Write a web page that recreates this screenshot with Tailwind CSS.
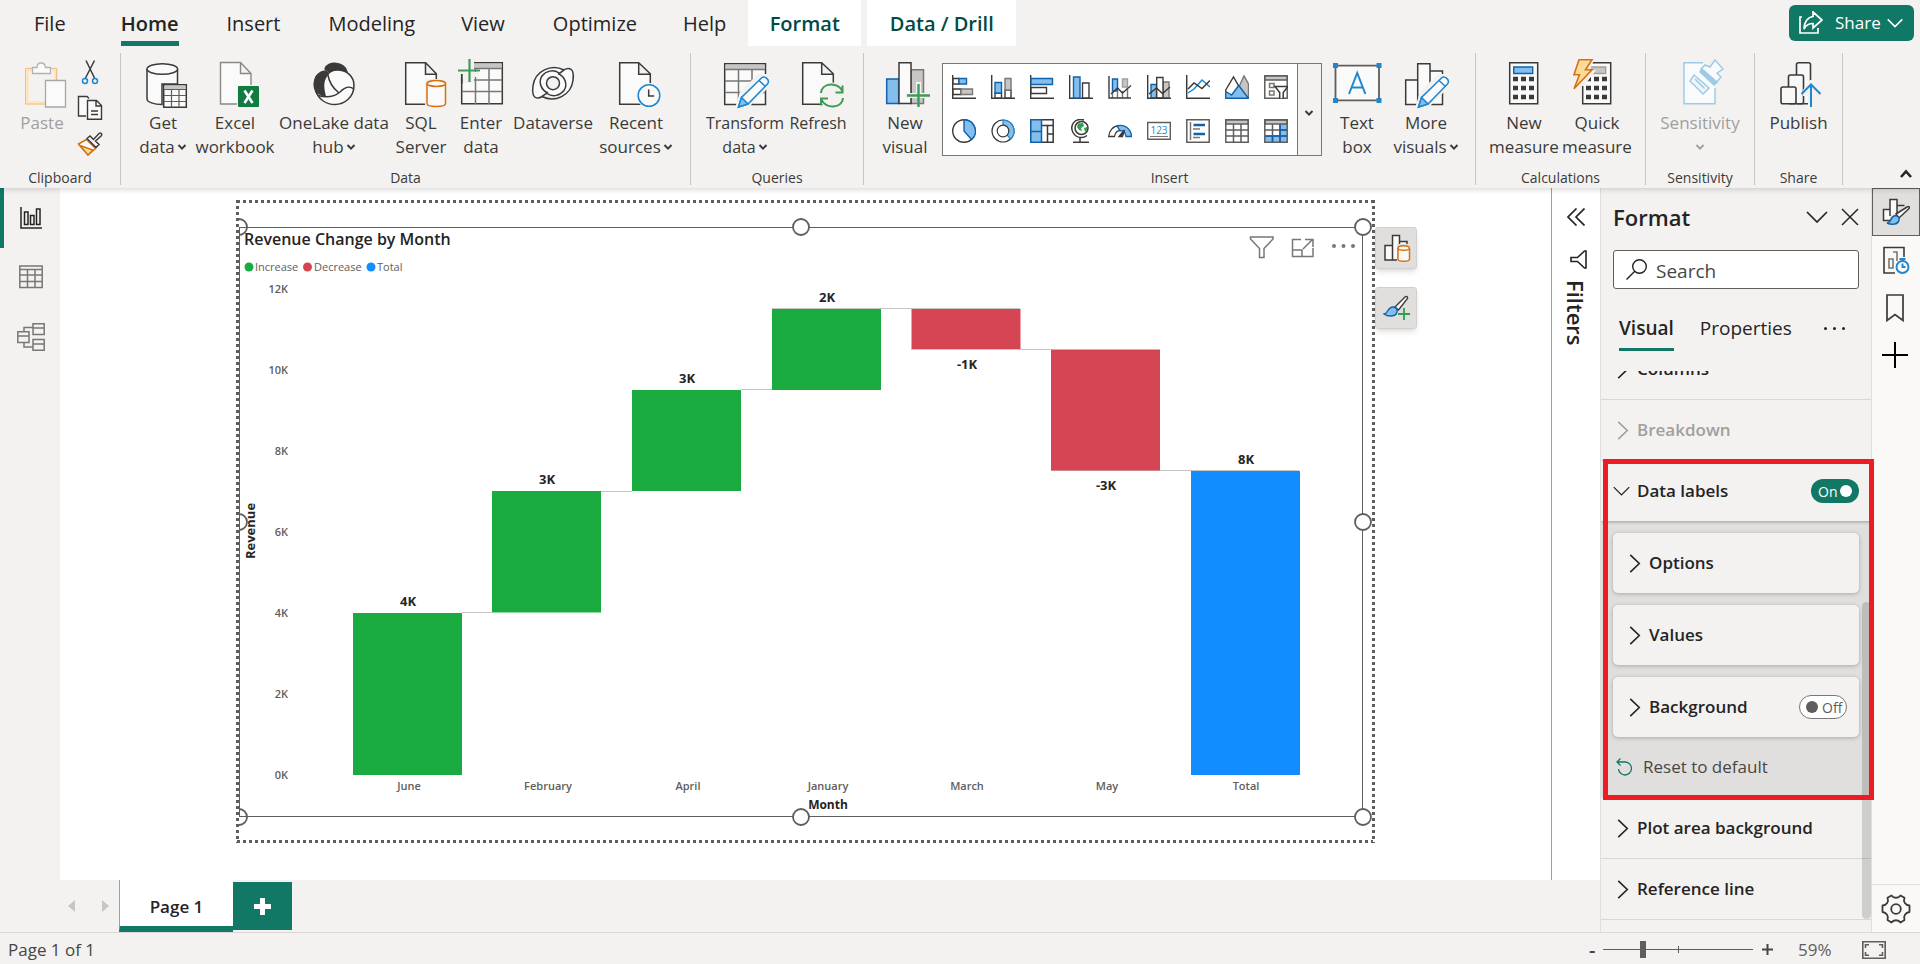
<!DOCTYPE html>
<html lang="en">
<head>
<meta charset="utf-8">
<title>Report editor</title>
<script src="https://cdn.jsdelivr.net/npm/@tailwindcss/browser@4"></script>
</head>
<body class="flex h-screen flex-col overflow-hidden bg-[#f3f2f1] font-['Open_Sans','Noto_Sans',sans-serif] text-[#252423]">

<svg class="hidden" aria-hidden="true">
  <symbol id="caret" viewBox="0 0 10 8"><path d="M1.5 2 5 5.6 8.500 2" fill="none" stroke="currentColor" stroke-width="2"/></symbol>
  <symbol id="right" viewBox="0 0 12 20"><path d="M1 1 10.500 10 1 19" fill="none" stroke="currentColor" stroke-width="1.700"/></symbol>
  <symbol id="down" viewBox="0 0 22 12"><path d="M1 1 11 11 21 1" fill="none" stroke="currentColor" stroke-width="1.700"/></symbol>
</svg>

<header class="relative z-10 shrink-0 shadow-[0_2px_5px_rgba(0,0,0,0.14)]">
  <div class="flex h-[46px] items-start">
    <nav class="flex h-full grow items-stretch pl-[10px] text-[20px] leading-[48px]">
      <a href="#" class="mr-[7px] px-6">File</a>
      <a href="#" class="relative px-6 font-semibold">Home<span class="absolute inset-x-6 bottom-0 h-[5px] bg-[#117865]"></span></a>
      <a href="#" class="px-6">Insert</a>
      <a href="#" class="pr-[22px] pl-6">Modeling</a>
      <a href="#" class="px-6">View</a>
      <a href="#" class="pr-[22px] pl-6">Optimize</a>
      <a href="#" class="pr-[22px] pl-6">Help</a>
      <a href="#" class="mr-[6px] w-[113px] bg-white text-center font-semibold text-[#004a43]">Format</a>
      <a href="#" class="w-[149px] bg-white text-center font-semibold text-[#004a43]">Data / Drill</a>
    </nav>
    <button class="mt-[5px] mr-[6px] flex h-9 w-[125px] items-center rounded-md bg-[#117865] pl-[10px] text-[17px] text-white">
      <svg class="size-6" viewBox="0 0 24 24" fill="none" stroke="currentColor" stroke-width="1.700"><path d="M3 6H1v16h18v-5M14 1l9 8-9 8v-4.500C10 12.500 7 14 5 18c0-7 4-12 9-12.500z"/></svg>
      <span class="ml-3">Share</span>
      <svg class="ml-[6px] h-[10px] w-4" viewBox="0 0 22 12"><path d="M1 1 11 11 21 1" fill="none" stroke="currentColor" stroke-width="2.200"/></svg>
    </button>
  </div>

  <div class="flex h-[142px] pt-[7px] text-[17px] leading-6 text-[#3b3a39]">
    <!-- Clipboard -->
    <section class="flex h-[132px] w-[121px] shrink-0 flex-col border-r border-[#c8c6c4]">
      <div class="flex grow pt-[7px] pl-4">
        <button class="flex w-[52px] flex-col items-center text-[#a19f9d]" disabled>
          <svg class="mb-[3px] h-12 w-12 shrink-0 overflow-visible" viewBox="18 60 48 48" fill="none"><path d="M32 69.500H27v33.500h29V69.500h-4" stroke="#fae5c5" stroke-width="4"/><path d="M32 68.500H25.500v35.500h31V68.500H51" stroke="#f0bd8f"/><path d="M32.500 73.500v-6H37c0-6 8-6 8.500 0h5v6z" fill="#fafafa" stroke="#b5b3b1" stroke-width="1.300"/><path d="M45.500 80.500h20v26.500h-20z" fill="#fafafa" stroke="#a9a7a5" stroke-width="1.300"/></svg>
          Paste
        </button>
        <div class="flex flex-col gap-3 pl-[10px]">
          <button class="h-6" aria-label="Cut"><svg class="h-6 w-6 overflow-visible" viewBox="78 59 24 24" fill="none" stroke="#3b3a39" stroke-width="1.500"><path d="M86 59.500 94.500 77M94.500 59.500 85.500 77"/><g stroke="#1e87cf"><circle cx="85" cy="80" r="2.500"/><circle cx="95" cy="80" r="2.500"/></g></svg></button>
          <button class="h-6" aria-label="Copy"><svg class="h-6 w-6 overflow-visible" viewBox="78 95 24 24" fill="#fafafa" stroke="#3b3a39" stroke-width="1.400"><path d="M86 115H78.500V95.500H87l2 2M87.500 99.500h9l5 5v13.800h-14zM96 99.500v5.500h5.500M91 110h7M91 113.500h7"/></svg></button>
          <button class="h-6" aria-label="Format painter"><svg class="h-6 w-6 overflow-visible" viewBox="78 130 24 24" fill="none" stroke-width="1.500"><path d="m78.500 142 8-4.500 9 9L88 153z" fill="#fff" stroke="#d8710c"/><path d="M80 143.500 93 148l-5 5z" fill="#fbdc9b" stroke="#d8710c"/><path d="m87 136.500 9 9 3-3-3.500-3.500 6-5.500c1-2-1-3-2.500-2l-5.500 6-3.500-3.500z" fill="#fafafa" stroke="#3b3a39"/></svg></button>
        </div>
      </div>
      <h2 class="text-center text-[14px] leading-[14px]">Clipboard</h2>
    </section>

    <!-- Data -->
    <section class="flex h-[132px] w-[570px] shrink-0 flex-col border-r border-[#c8c6c4]">
      <div class="flex grow justify-start pt-[7px] pl-[9px] whitespace-nowrap">
        <button class="flex w-[66px] shrink-0 flex-col items-center">
          <svg class="mb-[3px] h-12 w-12 shrink-0 overflow-visible" viewBox="139 60 48 48" fill="#fafafa" stroke="#3b3a39" stroke-width="1.500"><path d="M147 69v30c0 3 7 5.500 15 5.500V84h15.500V69"/><ellipse cx="162.300" cy="69" rx="15.300" ry="5.300"/><path d="M163.700 84.700h22.600v22.600h-22.600z"/><path d="M164.500 85.500h21v3.500h-21z" fill="#c8c6c4" stroke="none"/><path d="M164 89.500h22M164 95.500h22M164 101.500h22M171.500 89.500v18M179 89.500v18" stroke-width="1.200" stroke="#605e5c"/></svg>
          <span>Get</span><span class="flex items-center gap-[2px]">data <svg class="h-2 w-[10px]"><use href="#caret"/></svg></span>
        </button>
        <button class="flex w-[78px] shrink-0 flex-col items-center">
          <svg class="mb-[3px] h-12 w-12 shrink-0 overflow-visible" viewBox="211 60 48 48"><path d="M220.500 62.500h20l10.500 11v30.500h-30.500zM240.500 62.500v11h10.500" fill="#fafafa" stroke="#8a8886" stroke-width="1.400"/><path d="M237 85h22v22h-22z" fill="#f3f2f1"/><rect x="238" y="86" width="21" height="21" rx="1" fill="#107c41"/><path d="m244.500 90.500 8 12.500M252.500 90.500l-8 12.500" stroke="#fff" stroke-width="2.600"/></svg>
          <span>Excel</span><span>workbook</span>
        </button>
        <button class="flex w-[120px] shrink-0 flex-col items-center">
          <svg class="mb-[3px] h-12 w-12 shrink-0 overflow-visible" viewBox="310 60 48 48" fill="none" stroke="#3b3a39" stroke-width="1.500"><path d="M325 69c2-8 20-8 22 3l-10 5z" fill="#3b3a39"/><path d="M326 71c-12 1-15 14-8 24l7-1 4-20z" fill="#3b3a39"/><path d="M315.500 90c3 10 11 14.500 19.500 14.500 9 0 19-7 19-19 0-9-7-15.500-17-15.500-9 0-13.500 9-13.500 16 0 4 1 7 1.500 9.500-4 0-7-2-9.500-5.500z" fill="#fafafa"/><path d="M327.500 73.500c1.500 8 5 14.500 11 19M318 95.500c9 2.500 16 1.500 22-3.500 5-5 9-6.500 14-3"/></svg>
          <span>OneLake data</span><span class="flex items-center gap-[2px]">hub <svg class="h-2 w-[10px]"><use href="#caret"/></svg></span>
        </button>
        <button class="flex w-[54px] shrink-0 flex-col items-center">
          <svg class="mb-[3px] h-12 w-12 shrink-0 overflow-visible" viewBox="397 60 48 48" fill="#fafafa" stroke-width="1.500"><path d="M405.700 62.700h20l10.600 11v30.500h-30.600zM425.500 62.700v11.500h11" stroke="#3b3a39"/><path d="M425 79h13v28h-13z" fill="#f3f2f1"/><path d="M427 83.500v20c0 4 18.500 4 18.500 0v-20" stroke="#d8710c"/><ellipse cx="436.300" cy="83.500" rx="9.300" ry="2.900" stroke="#d8710c"/></svg>
          <span>SQL</span><span>Server</span>
        </button>
        <button class="flex w-[66px] shrink-0 flex-col items-center">
          <svg class="mb-[3px] h-12 w-12 shrink-0 overflow-visible" viewBox="457 60 48 48" fill="#fafafa" stroke="#3b3a39" stroke-width="1.500"><path d="M461.700 62.700h40.600v41h-40.600z"/><path d="M462.500 63.500h39V68h-39z" fill="#c8c6c4" stroke="none"/><path d="M462 68.500h40M462 80h40M462 91.500h40M475.500 69v35M489 69v35" stroke="#797775"/><path d="M457 58h17v14h5v5h-5v6h-11v-9h-6z" fill="#f3f2f1" stroke="none"/><path d="M461.700 74v10" /><path d="M458 70.500h22M469.500 59v23" stroke="#3f9b56" stroke-width="2.200"/></svg>
          <span>Enter</span><span>data</span>
        </button>
        <button class="flex w-[78px] shrink-0 flex-col items-center">
          <svg class="mb-[3px] h-12 w-12 shrink-0 overflow-visible" viewBox="529 60 48 48" fill="none" stroke="#3b3a39" stroke-width="1.500"><path d="M564 70c-12-6-28 0-31 15-1 7 0 13 5 13 5 0 5-5 10-5l5 4c12-1 20-8 20.500-17 .500-7 0-12-5-12-2 0-3 1-4.500 2z" fill="#fafafa" stroke="none"/><path d="M564 70C551 63.500 535 71 533 86c-1 7 0 12 5 12 5 0 5-4 10-5M542 96.500c13 6.500 29-1 31-16 1-7 0-12-5-12-5 0-5 4-10 5"/><path d="M548 93c-7-3-10-11-6-17 4-5 11-7 17-3M558 73.500c7 3 10 11 6 17-4 5-11 7-17 3"/><circle cx="553" cy="83.200" r="6.500" fill="#f3f2f1"/></svg>
          <span>Dataverse</span>
        </button>
        <button class="flex w-[88px] shrink-0 flex-col items-center">
          <svg class="mb-[3px] h-12 w-12 shrink-0 overflow-visible" viewBox="612 60 48 48" fill="#fafafa" stroke-width="1.500"><path d="M619.700 62.700h19l11.600 11v30.500h-30.600zM638.700 62.700v11.500h11.600" stroke="#3b3a39"/><circle cx="649" cy="95.500" r="12.500" fill="#f3f2f1"/><circle cx="649" cy="95.500" r="10.800" stroke="#1e87cf"/><path d="M648.700 89.500v6.500h5.500" fill="none" stroke="#3b3a39"/></svg>
          <span>Recent</span><span class="flex items-center gap-[2px]">sources <svg class="h-2 w-[10px]"><use href="#caret"/></svg></span>
        </button>
      </div>
      <h2 class="text-center text-[14px] leading-[14px]">Data</h2>
    </section>

    <!-- Queries -->
    <section class="flex h-[132px] w-[173px] shrink-0 flex-col border-r border-[#c8c6c4]">
      <div class="flex grow pt-[7px] pl-[11px] text-[16px] whitespace-nowrap">
        <button class="flex w-[86px] shrink-0 flex-col items-center">
          <svg class="mb-[3px] h-12 w-12 shrink-0 overflow-visible" viewBox="721 60 48 48" fill="#fafafa" stroke="#3b3a39" stroke-width="1.500"><path d="M724.700 63.700h40.800v40.800h-40.800z"/><path d="M725.500 64.500h39v4.500h-39z" fill="#c8c6c4" stroke="none"/><path d="M725 69.500h40M725 81h40M725 92.500h40M738.500 70v34M752 70v34" stroke="#797775"/><path d="M735 108 740 92 758 74h12v12l-22 22z" fill="#f3f2f1" stroke="none"/><path d="m738.500 107 3-9.500 20-19.500c3-3 9 2 6 6L748 104z" stroke="#1e87cf"/><path d="m738.500 107 3-9.500 6.500 6.500zM759 80.500l6.500 6" fill="#83beec" stroke="#1e87cf"/></svg>
          <span>Transform</span><span class="flex items-center gap-[2px]">data<svg class="h-2 w-[10px]"><use href="#caret"/></svg></span>
        </button>
        <button class="flex w-[60px] shrink-0 flex-col items-center">
          <svg class="mb-[3px] h-12 w-12 shrink-0 overflow-visible" viewBox="794 60 48 48" fill="#fafafa" stroke-width="1.500"><path d="M802.700 62.700h19l11.600 11v30.500h-30.600zM821.700 62.700v11.500h11.600" stroke="#3b3a39"/><circle cx="832" cy="95.500" r="13" fill="#f3f2f1"/><path d="M821 93c1-11 18-11 21.500-1.500M843 98c-1 11-18 11-21.500 1.500M842.500 85.500v7h-7M821 105.500v-7h7" fill="none" stroke="#3f9b56" stroke-width="2"/></svg>
          <span>Refresh</span>
        </button>
      </div>
      <h2 class="text-center text-[14px] leading-[14px]">Queries</h2>
    </section>

    <!-- Insert -->
    <section class="flex h-[132px] w-[612px] shrink-0 flex-col border-r border-[#c8c6c4]">
      <div class="flex grow pt-[7px] pl-[11px] whitespace-nowrap">
        <button class="flex w-[60px] shrink-0 flex-col items-center">
          <svg class="mb-[3px] h-12 w-12 shrink-0 overflow-visible" viewBox="881 60 48 48" stroke-width="1.500"><path d="M886.700 79h12v24.500h-12z" fill="#83beec" stroke="#0f62ab"/><path d="M911 69.700h12.500v33.800H911z" fill="#c8c6c4" stroke="#797775"/><path d="M899 62.700h12v40.800h-12z" fill="#fafafa" stroke="#3b3a39"/><path d="M916 82h5v11h9v5h-25v-5h11z" fill="#f3f2f1"/><path d="M907 95.500h23M918.500 84v23" stroke="#3f9b56" stroke-width="2.400"/></svg>
          <span>New</span><span>visual</span>
        </button>
        <div class="mt-[3px] ml-[7px] flex h-[93px] w-[380px] shrink-0 border border-[#797775] bg-white">
          <div class="grid grow grid-cols-9 content-start justify-items-center gap-y-5 px-[2px] pt-[11px]">
            <button aria-label="Stacked bar"><svg class="size-6" viewBox="0 0 24 24" fill="#fff" stroke="#3b3a39" stroke-width="1.400"><path d="M.7 0v23.300H24M1 3.500h6V9H1zM1 14h8v5.500H1z"/><path d="M7 3.500h7.500V9H7z" fill="#83beec" stroke="#0f62ab"/><path d="M9 14h11.500v5.500H9z" fill="#c8c6c4" stroke="#797775"/></svg></button>
            <button aria-label="Stacked column"><svg class="size-6" viewBox="0 0 24 24" fill="#fff" stroke="#3b3a39" stroke-width="1.400"><path d="M.7 0v23.300H24M4 18h6.500v5H4zM14 15h6v8h-6z"/><path d="M4 7.500h6.500V18H4z" fill="#83beec" stroke="#0f62ab"/><path d="M14 3.500h6V15h-6z" fill="#c8c6c4" stroke="#797775"/></svg></button>
            <button aria-label="Clustered bar"><svg class="size-6" viewBox="0 0 24 24" fill="#fff" stroke="#3b3a39" stroke-width="1.400"><path d="M.7 0v23.300H24M1 12.500h15.500v6H1z"/><path d="M1 3.500h21.500v6H1z" fill="#83beec" stroke="#0f62ab"/></svg></button>
            <button aria-label="Clustered column"><svg class="size-6" viewBox="0 0 24 24" fill="#fff" stroke="#3b3a39" stroke-width="1.400"><path d="M.7 0v23.300H24M13.500 8h6.500v15h-6.500z"/><path d="M4.500 2h6.500v21H4.500z" fill="#83beec" stroke="#0f62ab"/></svg></button>
            <button aria-label="Line and stacked column"><svg class="size-6" viewBox="0 0 24 24" fill="#fff" stroke="#3b3a39" stroke-width="1.400"><path d="M4.500 4h5v12h-5z" fill="#83beec" stroke="#0f62ab"/><path d="M14.500 4h5v8h-5z" fill="#c8c6c4" stroke="#a19f9d"/><path d="M4.500 16v7M9.500 16v7M14.500 16v7M19.500 13v10" stroke="#797775"/><path d="M1 1v22h22M3 19l6.500-6 5 5L23 10.500" fill="none"/></svg></button>
            <button aria-label="Line and clustered column"><svg class="size-6" viewBox="0 0 24 24" fill="#fff" stroke="#3b3a39" stroke-width="1.400"><path d="M4 9.500h5.500V23H4z" fill="#83beec" stroke="#0f62ab"/><path d="M16 7h6v16h-6z" fill="#c8c6c4" stroke="#797775"/><path d="M9.700 2.500H16V23H9.700z"/><path d="M.7 0v23.300H24M2 19l7.500-6 6 5.500L23 12" fill="none"/></svg></button>
            <button aria-label="Line chart"><svg class="size-6" viewBox="0 0 24 24" fill="none" stroke="#3b3a39" stroke-width="1.500"><path d="m2 18 6-4 8-9 8 7" stroke="#1e87cf"/><path d="M.7 0v23.300H24M2 14l6-6 8 5.500L24 5.500"/></svg></button>
            <button aria-label="Area chart"><svg class="size-6" viewBox="0 0 24 24" stroke-width="1.400"><path d="M9 23 19 .8 23.500 9v14z" fill="#c8c6c4" stroke="#797775"/><path d="M.7 15 8.500 2l12 21H.7z" fill="#fff" stroke="#3b3a39"/><path d="m.7 16.500 6 3.500 7-9.500L23.500 23.300H.7z" fill="#83beec" stroke="#0f62ab"/></svg></button>
            <button aria-label="Slicer"><svg class="size-6" viewBox="0 0 24 24" fill="#fff" stroke="#605e5c" stroke-width="1.500"><path d="M.8.800h22.400v22.400H.8z"/><path d="M1 1h22v4H1z" fill="#c8c6c4"/><path d="M5.500 8.500H10v4H5.500zM5.500 16H10v4H5.500z" stroke="#797775"/><path d="M11 11.500h13l-4.800 6V24h-3.500v-6.500z" stroke="#3b3a39"/></svg></button>
            <button aria-label="Pie chart"><svg class="size-6" viewBox="0 0 24 24" fill="#fff" stroke="#3b3a39" stroke-width="1.400"><circle cx="12" cy="12" r="11.300"/><path d="M12 .7A11.300 11.300 0 0 1 19.500 20.500L12 12z" fill="#83beec" stroke="#0f62ab"/></svg></button>
            <button aria-label="Donut chart"><svg class="size-6" viewBox="0 0 24 24" fill="#fff" stroke="#3b3a39" stroke-width="1.200"><circle cx="12" cy="12" r="11"/><path d="M12 1a11 11 0 0 1 7.500 19l-3.500-4a5.800 5.800 0 0 0-4-9.800z" fill="#83beec" stroke="#1e87cf"/><circle cx="12" cy="12" r="5.800"/></svg></button>
            <button aria-label="Treemap"><svg class="size-6" viewBox="0 0 24 24" fill="none" stroke="#3b3a39" stroke-width="1.500"><path d="M.8.800h22.400v22.400H.8zM11.500 6.500H23M17.500 6.500V23M17.500 15H23"/><path d="M.8.800h10.700v22.400H.8zM.8 12.500h10.700" fill="#83beec" stroke="#0f62ab"/></svg></button>
            <button aria-label="Map"><svg class="size-6" viewBox="0 0 24 24" fill="#fff" stroke="#3b3a39" stroke-width="1.500"><path d="M15 1C5-1.500.500 7 4 13.500c3 5.500 9.500 6.500 14 3M11 18v5M4 23.200h16" fill="none"/><circle cx="12.500" cy="9" r="6.500"/><path d="M9 4.500 14 4l1 3-3 2 1 3-3-1-2-3zM15 9l3-1v3l-2 2z" fill="#2f9e4d" stroke="none"/></svg></button>
            <button aria-label="Gauge"><svg class="size-6" viewBox="0 0 24 24" fill="#fff" stroke="#3b3a39" stroke-width="1.300"><path d="M.7 17.500C1 12 5 7 11 6.500l1.500 5c-4 0-5.500 3-6 6z"/><path d="M9 7c7-2.500 14 2.500 14.500 10.500h-5.500c-.5-4-3-6-6-6z" fill="#83beec" stroke="#0f62ab"/><path d="m11 17.500 5.500-6.500-2 6.500z" fill="#3b3a39"/></svg></button>
            <button aria-label="Card"><svg class="size-6" viewBox="0 0 24 24"><path d="M.7 3.500h22.600v16.800H.7z" fill="#fff" stroke="#605e5c" stroke-width="1.400"/><path d="M3 17.500h18" stroke="#797775"/><text x="12" y="14.500" text-anchor="middle" font-size="10" fill="#1e87cf">123</text></svg></button>
            <button aria-label="Multi-row card"><svg class="size-6" viewBox="0 0 24 24" fill="#fff" stroke="#605e5c" stroke-width="1.500"><path d="M.8.800h22.400v22.400H.8z"/><path d="M4.500 3v18M7 10h7M7 18.500h7" stroke="#797775"/><path d="M7.500 6H19M7.500 15H19" stroke="#0f62ab" stroke-width="2.400"/></svg></button>
            <button aria-label="Table"><svg class="size-6" viewBox="0 0 24 24" fill="#fff" stroke="#605e5c" stroke-width="1.500"><path d="M.8.800h22.400v22.400H.8z"/><path d="M1 1h22v4H1z" fill="#c8c6c4"/><path d="M1 11h22M1 17h22M8.500 5v18M16 5v18"/></svg></button>
            <button aria-label="Matrix"><svg class="size-6" viewBox="0 0 24 24" fill="none" stroke="#605e5c" stroke-width="1.500"><path d="M16 5h7v18H1v-6h15z" fill="#83beec" stroke="none"/><path d="M1 1h22v4H1z" fill="#c8c6c4"/><path d="M.8.800h22.400v22.400H.8zM1 11h22M1 17h22M8.500 5v18M16 5v18"/><path d="M16 5.500V17H1.500M16 11h7M16 17h7M16 17v6M8.500 17v6" stroke="#0f62ab"/></svg></button>
          </div>
          <button class="grid w-6 place-items-center border-l border-[#797775] bg-[#f3f2f1] pr-[2px]" aria-label="More chart types"><svg class="mt-[6px] h-2 w-[10px]"><use href="#caret"/></svg></button>
        </div>
        <button class="ml-[5px] flex w-[60px] shrink-0 flex-col items-center">
          <svg class="mb-[3px] h-12 w-12 shrink-0 overflow-visible" viewBox="1334 60 48 48"><path d="M1336.500 65.700h43.500v34.600h-43.500z" fill="#fafafa" stroke="#605e5c" stroke-width="1.800"/><path d="M1334 63h5v5h-5zM1377.500 63h5v5h-5zM1334 98h5v5h-5zM1377.500 98h5v5h-5z" fill="#1e87cf"/><path d="m1350 94 8.200-21 8.200 21M1353 87.500h10.500" fill="none" stroke="#1e87cf" stroke-width="2"/></svg>
          <span>Text</span><span>box</span>
        </button>
        <button class="flex w-[78px] shrink-0 flex-col items-center">
          <svg class="mb-[3px] h-12 w-12 shrink-0 overflow-visible" viewBox="1402 60 48 48" fill="#fafafa" stroke="#3b3a39" stroke-width="1.500"><path d="M1405.700 80h12v24.500h-12zM1430 71h12.500v33.500H1430zM1417.700 63.700H1430v40.800h-12.300z"/><path d="m1415 108 5-16 18-18h12v12l-22 22z" fill="#f3f2f1" stroke="none"/><path d="m1418.500 107 3-9.500 20-19.500c3-3 9 2 6 6L1428 104z" stroke="#1e87cf"/><path d="m1418.500 107 3-9.500 6.500 6.500zM1439 80.500l6.500 6" fill="#83beec" stroke="#1e87cf"/></svg>
          <span>More</span><span class="flex items-center gap-[2px]">visuals <svg class="h-2 w-[10px]"><use href="#caret"/></svg></span>
        </button>
      </div>
      <h2 class="text-center text-[14px] leading-[14px]">Insert</h2>
    </section>

    <!-- Calculations -->
    <section class="flex h-[132px] w-[170px] shrink-0 flex-col border-r border-[#c8c6c4]">
      <div class="flex grow pt-[7px] pl-[11px] whitespace-nowrap">
        <button class="flex w-[74px] shrink-0 flex-col items-center">
          <svg class="mb-[3px] h-12 w-12 shrink-0 overflow-visible" viewBox="1500 60 48 48"><path d="M1509.700 62.700h28v41h-28z" fill="#fafafa" stroke="#3b3a39" stroke-width="1.500"/><path d="M1513.700 67h19v6.500h-19z" fill="#83beec" stroke="#0f62ab" stroke-width="1.400"/><path d="M1513 79h21M1513 88h21M1513 97h21" stroke="#3b3a39" stroke-width="4.500" stroke-dasharray="5 3"/></svg>
          <span>New</span><span>measure</span>
        </button>
        <button class="flex w-[72px] shrink-0 flex-col items-center">
          <svg class="mb-[3px] h-12 w-12 shrink-0 overflow-visible" viewBox="1573 60 48 48"><path d="M1582.700 62.700h28v41h-28z" fill="#fafafa" stroke="#3b3a39" stroke-width="1.500"/><path d="M1590 67h15.700v6.500H1586z" fill="#c8c6c4" stroke="#a19f9d" stroke-width="1.400"/><path d="M1586 79h21M1586 88h21M1586 97h21" stroke="#3b3a39" stroke-width="4.500" stroke-dasharray="5 3"/><path d="M1571 57h24l-5 13h6l-12 16h-13z" fill="#f3f2f1"/><path d="m1579 59.700-5 15h5.500l-5.500 14 18-19h-6.500l6.500-10z" fill="#fbdc9b" stroke="#d8710c" stroke-width="1.600"/></svg>
          <span>Quick</span><span>measure</span>
        </button>
      </div>
      <h2 class="text-center text-[14px] leading-[14px]">Calculations</h2>
    </section>

    <!-- Sensitivity -->
    <section class="flex h-[132px] w-[109px] shrink-0 flex-col border-r border-[#c8c6c4]">
      <div class="flex grow justify-center pt-[7px]">
        <button class="flex flex-col items-center text-[#a19f9d]" disabled>
          <svg class="mb-[3px] h-12 w-12 shrink-0 overflow-visible" viewBox="1676 60 48 48" fill="#f8fafb" stroke="#9fcae6" stroke-width="1.500"><path d="M1703 62.700h-19v41h31V88"/><path d="m1694 75 15 13-6 6-13-13zM1695 79l9.500 9.500" fill="#edf5fa"/><path d="m1701 69 4-4 5 2 5-7 8 9-6 4 4 4-5 6z"/><path d="m1702 69 15 13-3 3-14-13z" fill="#9fcae6"/></svg>
          <span>Sensitivity</span><span class="flex h-6 items-center"><svg class="h-2 w-[10px]"><use href="#caret"/></svg></span>
        </button>
      </div>
      <h2 class="text-center text-[14px] leading-[14px]">Sensitivity</h2>
    </section>

    <!-- Share -->
    <section class="flex h-[132px] w-[88px] shrink-0 flex-col border-r border-[#c8c6c4]">
      <div class="flex grow justify-center pt-[7px]">
        <button class="flex flex-col items-center">
          <svg class="mb-[3px] h-12 w-12 shrink-0 overflow-visible" viewBox="1775 60 48 48" fill="#f8f8f8" stroke="#3b3a39" stroke-width="1.600"><rect x="1797.500" y="62.700" width="14" height="41" rx="2"/><rect x="1789.500" y="75" width="15" height="28.700" rx="2"/><rect x="1782" y="87" width="15" height="16.700" rx="2"/><path d="M1811 80h3v28h-5V96h-5v-6z" fill="#f3f2f1" stroke="none"/><path d="M1812 107V84.500M1802.500 94l9.500-9.500 9.500 9.500" fill="none" stroke="#1e87cf" stroke-width="2"/></svg>
          <span>Publish</span>
        </button>
      </div>
      <h2 class="text-center text-[14px] leading-[14px]">Share</h2>
    </section>
    <button class="mt-auto mr-2 mb-[9px] ml-auto" aria-label="Collapse ribbon"><svg class="h-[10px] w-3" viewBox="0 0 12 10"><path d="m1 8 5-5.500L11 8" fill="none" stroke="#252423" stroke-width="2.600"/></svg></button>
  </div>
</header>

<main class="flex min-h-0 grow">
  <div class="flex min-w-0 grow flex-col">
    <div class="flex min-h-0 grow">
      <nav class="flex w-[60px] shrink-0 flex-col bg-[#f3f2f1]">
        <button class="grid h-[60px] place-items-center border-l-4 border-[#117865] pr-[2px]" aria-label="Report view"><svg class="h-[22px] w-[22px]" viewBox="0 0 22 22" fill="none" stroke="#252423" stroke-width="1.500"><path d="M1 0v21h21M4.500 5H8v12.500H4.500zM10.500 8.500H14v9h-3.500zM16.500 2H20v15.500h-3.500z"/></svg></button>
        <button class="grid h-[58px] place-items-center pl-[2px]" aria-label="Table view"><svg class="h-6 w-6" viewBox="0 0 24 24" fill="none" stroke="#797775" stroke-width="1.500"><path d="M.8 1h22.400v21.500H.8zM1 4.500h22M1 10h22M1 16.500h22M8.500 4.500v18M16 4.500v18"/></svg></button>
        <button class="grid h-[62px] place-items-center pl-[2px]" aria-label="Model view"><svg class="h-7 w-7" viewBox="0 0 28 28" fill="none" stroke="#797775" stroke-width="1.500"><path d="M16 .800h11.200v10.700H16zM16 5h11M16 16.500h11.200v10.700H16zM16 21h11M.8 8.800H12v10.700H.8zM1 13h11M7 8.500V4.500h9M7 20v4h9"/></svg></button>
      </nav>
      <div class="flex min-w-0 grow justify-center bg-white pt-3">
        <div class="relative h-[643px] w-[1139px] shrink-0">
          <svg class="h-full w-full overflow-visible font-semibold" viewBox="236 200 1139 643" font-size="11" fill="#605e5c" role="img" aria-label="Waterfall chart of revenue change by month">
            <rect x="239.500" y="227.500" width="1123" height="589" fill="#fff" stroke="#605e5c"/>
            <!-- connector lines -->
            <g stroke="#c8c6c4" stroke-width="1"><path d="M462 612.500h30M601 491.500h31M741 389.500h31M772 308.500h248M911 349.500h140M1051 470.500h248"/></g>
            <g fill="#1aab40"><path d="M353 613h109v162H353zM492 491h109v121.500H492zM632 390h109v101H632zM772 309h109v81H772z"/></g>
            <path d="M911.500 309h109v40h-109zM1051 349.500h109v121h-109z" fill="#d64554"/>
            <path d="M1191 471h109v304h-109z" fill="#118dff"/>
            <text x="244" y="245" font-size="16" fill="#252423" class="font-semibold">Revenue Change by Month</text>
            <g class="font-normal"><circle cx="249" cy="267" r="4.500" fill="#1aab40"/><text x="255" y="271">Increase</text><circle cx="307.500" cy="267" r="4.500" fill="#d64554"/><text x="314" y="271">Decrease</text><circle cx="371" cy="267" r="4.500" fill="#118dff"/><text x="377" y="271">Total</text></g>
            <g text-anchor="end"><text x="288" y="293">12K</text><text x="288" y="374">10K</text><text x="288" y="455">8K</text><text x="288" y="536">6K</text><text x="288" y="617">4K</text><text x="288" y="698">2K</text><text x="288" y="779">0K</text></g>
            <g text-anchor="middle"><text x="409" y="790">June</text><text x="548" y="790">February</text><text x="688" y="790">April</text><text x="828" y="790">January</text><text x="967" y="790">March</text><text x="1107" y="790">May</text><text x="1246" y="790">Total</text>
            <g fill="#252423" font-size="13" class="font-bold"><text x="828" y="809" font-size="12">Month</text><text transform="translate(255 531) rotate(-90)">Revenue</text><text x="408" y="606">4K</text><text x="547" y="484">3K</text><text x="687" y="383">3K</text><text x="827" y="302">2K</text><text x="967" y="369">-1K</text><text x="1106" y="490">-3K</text><text x="1246" y="464">8K</text></g></g>
            <!-- selection handles -->
            <g fill="#fff" stroke="#605e5c" stroke-width="1.800"><circle cx="801" cy="227" r="8"/><circle cx="1363" cy="227" r="8"/><circle cx="1363" cy="522" r="8"/><circle cx="801" cy="817" r="8"/><circle cx="1363" cy="817" r="8"/><g fill="none"><path d="M239 219a8 8 0 0 1 0 16M239 514a8 8 0 0 1 0 16M239 809a8 8 0 0 1 0 16"/></g></g>
            <path d="M237.500 200v643M1373.500 200v643M237 201.500h1136M237 841.500h1136" fill="none" stroke="#605e5c" stroke-width="3" stroke-dasharray="3 3"/>
            <g fill="none" stroke="#797775" stroke-width="1.500"><path d="M1250.500 237h22.500v2l-9 9.500v9h-4.500v-9l-9-9.500zM1301 239.500h-8.500v17h20.500V248M1292.500 250h9.500v6.500M1303 249l9-9M1305 239.500h8v7.500"/></g>
            <g fill="#797775"><circle cx="1334" cy="246" r="2"/><circle cx="1343.500" cy="246" r="2"/><circle cx="1353" cy="246" r="2"/></g>
          </svg>
          <div class="absolute top-[27px] left-full flex flex-col gap-[18px]">
            <button class="grid size-[42px] place-items-center rounded-[3px] border border-[#d2d0ce] bg-[#e1dfdd] pl-px shadow-md" aria-label="Build visual"><svg class="size-[28px]" viewBox="0 0 28 28" fill="#fafafa" stroke="#3b3a39" stroke-width="1.500"><path d="M2 11.500h7.500V26H2zM16.500 7.500H24V26h-7.500zM9.500 1.500h7V26h-7z"/><path d="M14 10h12v17H14z" fill="#e1dfdd" stroke="none"/><path d="M15 14v11c0 3 11.500 3 11.500 0V14" stroke="#d8710c"/><ellipse cx="20.700" cy="14" rx="5.700" ry="2.300" stroke="#d8710c"/></svg></button>
            <button class="grid size-[42px] place-items-center rounded-[3px] border border-[#d2d0ce] bg-[#e1dfdd] pl-px shadow-md" aria-label="Format visual"><svg class="size-[28px]" viewBox="0 0 28 28" stroke-width="1.400"><path d="M12 13 22 3c1.500-1.500 3 0 2.500 1.500L15.500 16z" fill="#fafafa" stroke="#3b3a39"/><path d="M1 20c4 0 3-6 8-7 3-.500 6 2 5 5-1 5-9 5-13 2z" fill="#83beec" stroke="#0f62ab"/><path d="M15 20h12M21 14v12" stroke="#2f9e4d" stroke-width="1.800"/></svg></button>
          </div>
        </div>
      </div>
    </div>
    <div class="flex h-[52px] shrink-0 items-stretch pl-[60px]">
      <div class="flex w-[59px] items-center gap-[27px] pl-2 text-[#c8c6c4]"><button aria-label="Previous page"><svg class="h-3 w-[7px]" viewBox="0 0 7 12" fill="currentColor"><path d="M7 0v12L0 6z"/></svg></button><button aria-label="Next page"><svg class="h-3 w-[7px]" viewBox="0 0 7 12" fill="currentColor"><path d="M0 0v12l7-6z"/></svg></button></div>
      <button class="w-[114px] border-b-[6px] border-l border-b-[#117865] border-l-[#a19f9d] bg-white pt-[7px] text-[17px] font-semibold">Page 1</button>
      <button class="mt-[2px] grid h-12 w-[59px] place-items-center bg-[#117865]" aria-label="New page"><svg class="size-[17px]" viewBox="0 0 17 17"><path d="M0 8.500h17M8.500 0v17" stroke="#fff" stroke-width="5"/></svg></button>
    </div>
  </div>

  <aside class="flex w-[49px] shrink-0 flex-col justify-between bg-[#f3f2f1]">
    <div class="mb-[52px] flex grow flex-col items-center border-l border-[#a19f9d] bg-white pt-5">
      <button aria-label="Expand filters"><svg class="h-[18px] w-[18px]" viewBox="0 0 18 18" fill="none" stroke="#252423" stroke-width="1.700"><path d="M9.500.500 1 9l8.500 8.500M17.500.500 9 9l8.500 8.500"/></svg></button>
      <svg class="mt-6 ml-1 h-[19px] w-[17px]" viewBox="0 0 17 19" fill="none" stroke="#252423" stroke-width="1.600"><path d="M16 1v17h-1.500L7.500 11.500H1v-4h6.500L14.500 1z"/></svg>
      <h2 class="mt-[11px] text-[22px] leading-6 font-semibold [writing-mode:vertical-rl]">Filters</h2>
    </div>
  </aside>

  <aside class="relative flex w-[271px] shrink-0 flex-col border-l border-[#e1dfdd]">
    <div class="flex h-[62px] items-center pr-3 pb-1 pl-3">
      <h2 class="grow text-[22px] font-semibold">Format</h2>
      <button aria-label="Collapse pane"><svg class="h-3 w-[22px]"><use href="#down"/></svg></button>
      <button class="ml-[13px]" aria-label="Close"><svg class="size-[18px]" viewBox="0 0 18 18"><path d="m1 1 16 16M17 1 1 17" stroke="#252423" stroke-width="1.500"/></svg></button>
    </div>
    <label class="mx-3 flex h-[39px] items-center rounded-[3px] border border-[#605e5c] bg-white pl-3">
      <svg class="size-[21px] shrink-0" viewBox="0 0 21 21" fill="none" stroke="#252423" stroke-width="1.400"><circle cx="13.500" cy="7.500" r="6.800"/><path d="m8.500 12.500-8 8"/></svg>
      <input type="text" placeholder="Search" aria-label="Search" class="ml-[9px] w-full min-w-0 bg-transparent pt-[3px] text-[19px] outline-none placeholder:text-[#484644]">
    </label>
    <div class="flex h-[82px] pt-[17px] pl-[18px] text-[19px] leading-[44px]">
      <a href="#" class="h-[45px] border-b-[3px] border-[#117865] font-semibold">Visual</a>
      <a href="#" class="ml-[26px] h-11">Properties</a>
      <button class="mt-[19px] ml-8 flex h-[6px] items-center gap-[6px]" aria-label="More options"><i class="size-[3px] rounded-full bg-[#252423]"></i><i class="size-[3px] rounded-full bg-[#252423]"></i><i class="size-[3px] rounded-full bg-[#252423]"></i></button>
    </div>
    <div class="flex min-h-0 grow flex-col justify-start overflow-hidden text-[17px] font-semibold">
      <div class="-mt-8 shrink-0">
        <button class="flex h-[61px] w-full items-center border-b border-[#d9d7d5] pl-4"><svg class="mr-2 h-[19px] w-3"><use href="#right"/></svg>Columns</button>
        <button class="flex h-[61px] w-full items-center border-b border-[#d9d7d5] pl-4 text-[#a19f9d]" disabled><svg class="mr-2 h-[19px] w-3"><use href="#right"/></svg>Breakdown</button>
        <div class="relative flex h-[60px] items-center pr-3 pl-3 shadow-[0_1px_3px_rgba(0,0,0,0.3)]">
          <button class="flex grow items-center"><svg class="mr-[7px] h-[10px] w-[17px]"><use href="#down"/></svg>Data labels</button>
          <button role="switch" aria-checked="true" aria-label="Data labels" class="flex h-6 w-12 items-center justify-between rounded-full bg-[#117865] pr-[7px] pl-[7px] text-[14px] font-normal text-white">On<span class="size-3 rounded-full bg-white"></span></button>
        </div>
        <div class="flex h-[277px] flex-col gap-3 bg-[#e1dfdd] px-3 pt-3">
          <button class="flex h-[60px] items-center rounded-[5px] bg-[#f3f2f1] pl-4 shadow-[0_1px_4px_rgba(0,0,0,0.25)]"><svg class="mr-2 h-[19px] w-3"><use href="#right"/></svg>Options</button>
          <button class="flex h-[60px] items-center rounded-[5px] bg-[#f3f2f1] pl-4 shadow-[0_1px_4px_rgba(0,0,0,0.25)]"><svg class="mr-2 h-[19px] w-3"><use href="#right"/></svg>Values</button>
          <div class="flex h-[60px] items-center rounded-[5px] bg-[#f3f2f1] pr-3 pl-4 shadow-[0_1px_4px_rgba(0,0,0,0.25)]">
            <button class="flex grow items-center"><svg class="mr-2 h-[19px] w-3"><use href="#right"/></svg>Background</button>
            <button role="switch" aria-checked="false" aria-label="Background" class="flex h-6 w-12 items-center gap-1 rounded-full border border-[#797775] bg-white pl-[6px] text-[14px] font-normal text-[#605e5c]"><span class="size-3 rounded-full bg-[#605e5c]"></span>Off</button>
          </div>
          <button class="mt-[6px] flex h-6 items-center pl-[3px] text-[17px] font-normal text-[#484644]"><svg class="mr-[10px] h-[18px] w-[17px]" viewBox="0 0 17 18" fill="none" stroke="#117865" stroke-width="1.300"><path d="M1 4h8.500a6.500 6.500 0 1 1-7 7M4.500.500 1 4l3.500 3.500"/></svg>Reset to default</button>
        </div>
        <button class="flex h-[61px] w-full items-center border-b border-[#d9d7d5] pl-4"><svg class="mr-2 h-[19px] w-3"><use href="#right"/></svg>Plot area background</button>
        <button class="flex h-[61px] w-full items-center border-b border-[#d9d7d5] pl-4"><svg class="mr-2 h-[19px] w-3"><use href="#right"/></svg>Reference line</button>
      </div>
    </div>
    <span class="absolute top-[414px] right-0 h-[317px] w-[9px] rounded-full bg-black/15"></span>
    <!-- highlight around the data label settings -->
    <div class="pointer-events-none absolute top-[271px] -right-[3px] left-[2px] z-10 h-[341px] border-[5px] border-[#ed1c24]"></div>
  </aside>

  <aside class="flex w-[49px] shrink-0 flex-col items-center border-l border-[#e1dfdd] bg-[#faf9f8]">
    <button class="grid h-12 w-full place-items-center border border-[#605e5c] bg-[#e1dfdd]" aria-label="Format pane"><svg class="size-[28px]" viewBox="0 0 28 28" fill="#fafafa" stroke="#3b3a39" stroke-width="1.500"><path d="M8 22.500H1.500v-11H8M8 18V1.500h7V15M15 7.500h7.500"/><path d="M14 16 25 9c2-1 3 0 2 1.500L17 20z"/><path d="M5 25c4 0 3-5 7-7 3-1 6 1 5 4-1 5-8 5-12 3z" fill="#83beec" stroke="#0f62ab"/></svg></button>
    <button class="grid h-12 w-full place-items-center" aria-label="Performance analyzer"><svg class="size-[28px]" viewBox="0 0 28 28" fill="none" stroke="#3b3a39" stroke-width="1.600"><path d="M22 11V1.500H2V27h11"/><path d="M7 13h4v9H7zM11 6h4v9M11 13v9" stroke="#797775"/><g stroke="#1e87cf" stroke-width="1.900"><circle cx="20.500" cy="21" r="6" fill="#fafafa"/><path d="M20.500 17.500V21h3M17.500 13h6M20.500 13v2"/></g></svg></button>
    <button class="grid h-12 w-full place-items-center pr-[2px]" aria-label="Bookmarks"><svg class="h-[28px] w-[18px]" viewBox="0 0 18 28" fill="none" stroke="#3b3a39" stroke-width="1.700"><path d="M1 1h16v25.500l-8-6-8 6z"/></svg></button>
    <button class="grid h-12 w-full place-items-center pr-[2px] pb-[2px]" aria-label="Add pane"><svg class="size-[26px]" viewBox="0 0 26 26"><path d="M0 13h26M13 0v26" stroke="#000" stroke-width="2"/></svg></button>
    <button class="mt-auto grid h-12 w-full place-items-center border-t border-[#e1dfdd]" aria-label="Settings"><svg class="size-[30px]" viewBox="0 0 30 30" fill="none" stroke="#3b3a39" stroke-width="1.800"><circle cx="15" cy="15" r="4.800"/><path d="M10.500 1.500c2 3 7 3 9 0l4 2.300c-1.500 3.700.800 7.500 5 7.700v6.500c-4 .500-6.500 4-5 8l-4 2.500c-2-3-7-3-9 0l-4-2.500c1.500-4-1-7.500-5-8v-6.500c4.200-.200 6.500-4 5-7.700z" stroke-linejoin="round"/></svg></button>
  </aside>
</main>

<footer class="flex h-8 shrink-0 items-center border-t border-[#d9d7d5] pt-[2px] pr-[34px] pl-2 text-[17px] text-[#484644]">
  <span class="grow">Page 1 of 1</span>
  <button class="w-[14px] text-left text-[20px] leading-none font-semibold" aria-label="Zoom out">-</button>
  <span class="relative flex h-5 w-[150px] items-center">
    <span class="absolute left-1/2 h-[7px] w-px bg-[#605e5c]"></span>
    <input type="range" min="10" max="200" value="59" aria-label="Zoom" class="h-px w-full appearance-none bg-[#605e5c] [&::-webkit-slider-thumb]:h-[17px] [&::-webkit-slider-thumb]:w-[6px] [&::-webkit-slider-thumb]:appearance-none [&::-webkit-slider-thumb]:bg-[#605e5c]">
  </span>
  <button class="ml-[8px] grid w-3 place-items-center" aria-label="Zoom in"><svg class="size-[11px]" viewBox="0 0 11 11"><path d="M0 5.500h11M5.500 0v11" stroke="#484644" stroke-width="2"/></svg></button>
  <span class="ml-[25px] w-16 text-[17px] text-[#605e5c]">59%</span>
  <button aria-label="Fit to page"><svg class="h-[18px] w-6" viewBox="0 0 24 18" fill="none" stroke="#605e5c" stroke-width="1.600"><path d="M.8.800h22.400v16.400H.8zM3.500 7V3.700H7M17 3.700h3.500V7M20.500 11v3.300H17M7 14.300H3.500V11"/></svg></button>
</footer>
</body>
</html>
